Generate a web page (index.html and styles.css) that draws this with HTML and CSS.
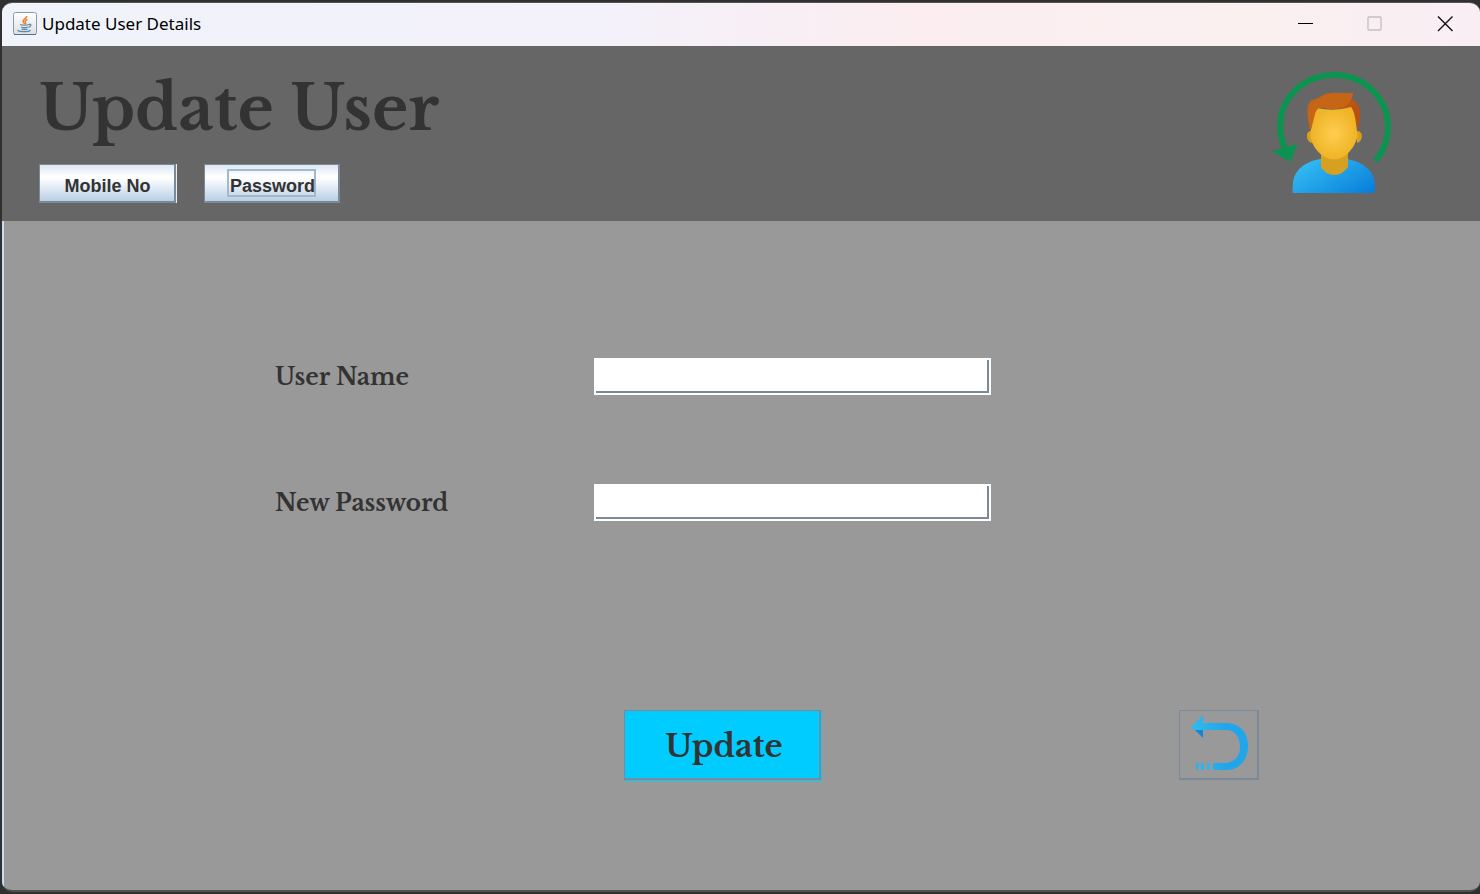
FILE: index.html
```html
<!DOCTYPE html>
<html lang="en">
<head>
<meta charset="utf-8">
<title>Update User Details</title>
<link rel="stylesheet" href="styles.css">
</head>
<body>
<div class="window">
  <div class="titlebar">
    <svg class="app-icon" viewBox="0 0 24 24" aria-hidden="true">
      <defs><linearGradient id="tile" x1="0" y1="0" x2="0" y2="1"><stop offset="0" stop-color="#fff"/><stop offset="1" stop-color="#dcdfe3"/></linearGradient></defs>
      <rect x="0.5" y="0.5" width="23" height="22" rx="2" fill="url(#tile)" stroke="#8a99a8"/>
      <path d="M1 22.5h22" stroke="#53718a"/>
      <path d="M13.500 4c1 2-4 3.500-3.500 5.500.2 1 1.500 1.500 1.200 2.500M14.500 7.500c-2 .8-3 1.700-2 2.700.6.700.3 1.300-.2 1.800" fill="none" stroke="#ee8330" stroke-width="1.500"/>
      <path d="M7 12.500c2 .9 7 .9 9 0M8 15c2 .8 5 .8 7 0M8.500 17c2 .7 4 .7 6 0M16 12.300c3-.5 2 2.500-.5 3M5 18c-1 2 10 2.200 12.500.2" fill="none" stroke="#5b86a5" stroke-width="1.300"/>
    </svg>
    <span class="caption">Update User Details</span>
    <div class="window-controls">
      <button class="control" aria-label="Minimize"><svg viewBox="0 0 16 16"><path d="M1 7.500h15" stroke="#000"/></svg></button>
      <button class="control" aria-label="Maximize" disabled><svg viewBox="0 0 16 16"><rect x="1" y="1" width="13" height="13" rx="1" fill="none" stroke="#c5bec1" stroke-width="1.300"/></svg></button>
      <button class="control" aria-label="Close"><svg viewBox="0 0 16 16"><path d="M1 0.500l14.500 14.500M15.500 0.500L1 15" stroke="#111" stroke-width="1.400"/></svg></button>
    </div>
  </div>
  <header class="header">
    <div class="heading">
      <h1>Update User</h1>
      <div class="tabs">
        <button class="tab tab-mobile">Mobile No</button>
        <button class="tab tab-password"><span class="focus-ring">Password</span></button>
      </div>
    </div>
    <svg class="avatar" viewBox="0 0 145 145" role="img" aria-label="Update user">
      <defs>
        <radialGradient id="face"><stop offset="0" stop-color="#ffcd50"/><stop offset="1" stop-color="#efb426"/></radialGradient>
        <linearGradient id="shirt" x1="0" y1="0.200" x2="1" y2="0.900"><stop offset="0" stop-color="#36bef2"/><stop offset="1" stop-color="#087fdb"/></linearGradient>
        <linearGradient id="hair" x1="0" y1="0" x2="1" y2="0.500"><stop offset="0" stop-color="#c96815"/><stop offset="1" stop-color="#b84f14"/></linearGradient>
      </defs>
      <path d="M24 86C18 72 19 52 28 39C39 23 56 15 74.500 15C105 15 128 39 128 67C128 79 124 90 117 99" fill="none" stroke="#0b9450" stroke-width="6" stroke-linecap="round"/>
      <path d="M12 91L37.500 84L30.500 102Z" fill="#0b9450"/>
      <path d="M33 133Q32 131 33 125C33 110 46 101 61 99H87C103 102 115 111 115 125V130Q115 133 112 133Z" fill="url(#shirt)"/>
      <path d="M61 91H88V107C84 112 80 115 74.500 115C69 115 64 112 61 107Z" fill="#d6a021"/>
      <path d="M51 71C45 71 46 82 52 83zM97 71C104 71 103 82 97 83z" fill="#d9a01f"/>
      <path d="M51 71C47 60 46 46 50 42C53 38 58 40 61 37C67 32 75 33 93 33L91 39C99 42 101 50 100 57L98 71L92 49L58 48Z" fill="url(#hair)"/>
      <path d="M57 48Q74 52 91 47C95 52 96 62 97.500 76C96 84 91 91 85 96Q74 103 63 96C56 91 51 83 50.500 76C51 66 53 54 57 48Z" fill="url(#face)"/>
      <path d="M60 37C68 31 77 33 93 33C92 40 89 44 84 47C76 50 68 50 62 47Q57 47 55 54L52 66C51 69 51 71 50.500 71C47 55 48 42 60 37Z" fill="#c56515"/>
    </svg>
  </header>
  <main class="content">
    <form class="form">
      <label for="user-name">User Name</label>
      <input class="field" id="user-name" type="text">
      <label for="new-password">New Password</label>
      <input class="field" id="new-password" type="password">
    </form>
    <div class="actions">
      <button class="update">Update</button>
      <button class="back" aria-label="Back">
        <svg viewBox="1 1 77 67" aria-hidden="true">
          <defs><linearGradient id="arrow" x1="0" y1="0" x2="1" y2="0"><stop offset="0" stop-color="#31bbf2"/><stop offset="0.600" stop-color="#23a5e8"/><stop offset="1" stop-color="#20a6eb"/></linearGradient>
          <linearGradient id="tail" x1="0" y1="0" x2="1" y2="0"><stop offset="0" stop-color="#2bb0ee"/><stop offset="1" stop-color="#2fb6f1"/></linearGradient></defs>
          <path d="M13 17L24 28V20Z" fill="#1785d5"/>
          <path d="M12 17L24 5V13H49C61 14 69 22 69 36C69 50 60 60 48 60H34V53H47C56 52 61 46 61 37C61 27 56 20 47 20H15Z" fill="url(#arrow)"/>
          <path d="M28 53h3v7h-3zM22 53h3v7h-3zM17 53h3v2l-1 5h-2z" fill="url(#tail)"/>
        </svg>
      </button>
    </div>
  </main>
</div>
</body>
</html>
```
FILE: styles.css
```css
* { box-sizing: border-box; }

body {
  margin: 0;
  min-height: 100vh;
  display: flex;
  background: #303030;
  color: #333;
}

button { margin: 0; padding: 0; border: 0; color: inherit; }

.window {
  flex: 1;
  display: flex;
  flex-direction: column;
  margin: 2px 0 2px 2px;
  border-top: 1px solid #555;
  border-bottom: 2px solid #505050;
  border-radius: 10px;
  overflow: hidden;
}

.titlebar {
  display: flex;
  align-items: center;
  height: 43px;
  padding: 0 0 2px 11px;
  gap: 5px;
  background: linear-gradient(90deg, #f0f3f9 0%, #f3f1fa 40%, #fbedf0 62%, #faf0f0 85%, #f8eef4 100%);
}

.app-icon { width: 24px; height: 24px; }

.caption {
  font: 17px/24px "Noto Sans", sans-serif;
  color: #000;
}

.window-controls { display: flex; margin-left: auto; }

.control {
  width: 70px;
  height: 40px;
  display: grid;
  place-items: center;
  background: none;
}

.control svg { width: 16px; height: 16px; }

.header {
  display: flex;
  justify-content: space-between;
  align-items: flex-start;
  height: 175px;
  padding: 14px 75px 0 37px;
  background: #666;
}

h1 {
  margin: 0;
  padding-top: 7px;
  font: bold 62px/84px "Libre Baskerville", "Liberation Serif", serif;
}

.tabs { display: flex; gap: 27px; margin-top: 13px; }

.tab {
  height: 39px;
  display: grid;
  place-items: center;
  border: 1px solid #7a8a99;
  border-right-width: 2px;
  border-bottom-width: 2px;
  background: linear-gradient(#dde8f3 0%, #fff 32%, #fff 36%, #b8cfe5 100%);
  font: bold 18px/24px "Liberation Sans", Arial, sans-serif;
}

.tab-mobile { width: 138px; padding: 6px 0 0 1px; border-right-width: 3px; position: relative; }

.tab-mobile::after {
  content: "";
  position: absolute;
  top: -1px;
  right: -3px;
  bottom: -2px;
  width: 1px;
  background: #e6eff8;
}

.tab-password { width: 136px; }

.focus-ring {
  width: 89px;
  height: 28px;
  padding: 3px 0 0 1px;
  border: 2px solid #a3b8cc;
  line-height: 24px;
  text-align: left;
}

.avatar { width: 145px; height: 145px; }

.content {
  flex: 1;
  border-left: 2px solid #c8dcf4;
  background: #999;
  padding: 137px 221px 109px 271px;
  display: flex;
  flex-direction: column;
  justify-content: space-between;
}

.form {
  display: grid;
  grid-template-columns: 319px 397px;
  row-gap: 89px;
  align-items: center;
}

.form label {
  padding-top: 2px;
  font: bold 23px/35px "Libre Baskerville", "Liberation Serif", serif;
}

.field {
  width: 100%;
  height: 37px;
  padding: 0 6px;
  border: 2px solid #fff;
  background: #fff;
  box-shadow: inset -2px -2px #7a8a99;
  font: 20px "Liberation Sans", sans-serif;
  outline: 0;
}

.actions {
  display: flex;
  justify-content: space-between;
  padding-left: 349px;
}

.update {
  width: 198px;
  height: 71px;
  padding-left: 2px;
  border: 1px solid #7a8a99;
  border-right-color: #00ccff;
  border-bottom-color: #00ccff;
  background: #00ccff;
  box-shadow: inset -2px -2px #7a8a99;
  font: bold 31px/44px "Libre Baskerville", "Liberation Serif", serif;
}

.back {
  width: 80px;
  height: 70px;
  border: 1px solid #7a8a99;
  border-right-width: 2px;
  border-bottom-width: 2px;
  background: none;
}

.back svg { display: block; width: 100%; height: 100%; }
```
